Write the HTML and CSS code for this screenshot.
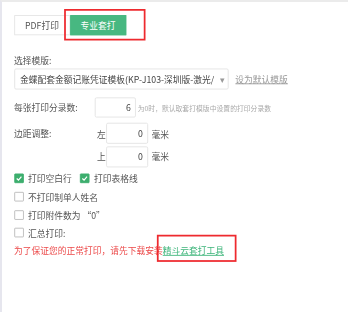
FILE: index.html
```html
<!DOCTYPE html>
<html>
<head>
  <meta charset="UTF-8" />
  <title>打印设置</title>
  <link rel="stylesheet" href="styles.css">
</head>
<body>
  <div class="frame">
    <div class="panel">
      <div class="tabs">
        <span class="tab">PDF打印</span>
        <span class="tab active">专业套打<span class="mark mark-tab"></span></span>
      </div>

      <div class="field-label">选择模版:</div>
      <div class="select-row">
        <div class="select">
          <span class="select-text">金蝶配套金额记账凭证模板(KP-J103-深圳版-激光/</span>
          <span class="caret">▾</span>
        </div>
        <a class="set-default">设为默认模版</a>
      </div>

      <div class="row count-row">
        <span class="label">每张打印分录数:</span>
        <span class="input count">6</span>
        <span class="hint">为0时，默认取套打模版中设置的打印分录数</span>
      </div>

      <div class="row margin-row">
        <span class="label">边距调整:</span>
        <div class="margin-grid">
          <span class="side">左</span><span class="input">0</span><span class="unit">毫米</span>
          <span class="side">上</span><span class="input">0</span><span class="unit">毫米</span>
        </div>
      </div>

      <div class="checks-inline">
        <label class="check"><span class="box checked"></span>打印空白行</label>
        <label class="check"><span class="box checked"></span>打印表格线</label>
      </div>
      <label class="check line"><span class="box"></span>不打印制单人姓名</label>
      <label class="check line"><span class="box"></span>打印附件数为 “0”</label>
      <label class="check line"><span class="box"></span>汇总打印:</label>

      <p class="warn">为了保证您的正常打印，请先下载安装<a class="tool-link">精斗云套打工具<span class="mark mark-link"></span></a></p>
    </div>
  </div>
</body>
</html>
```

FILE: styles.css
```css
html, body {
  margin: 0;
  padding: 0;
  background: #fff;
}
body {
  font-family: "Noto Sans CJK SC", "Noto Sans", sans-serif;
  font-size: 10px;
  color: #555;
  width: 348px;
  height: 312px;
  overflow: hidden;
}
.frame {
  box-sizing: border-box;
  height: 312px;
  border-top: 2px solid #ebebeb;
  border-left: 2px solid #e6e6ee;
  overflow: hidden;
}
/* the original page is rendered at a small zoom level */
.panel {
  width: 395px;
  padding: 15px 0 0 13.7px;
  transform: scale(0.875);
  transform-origin: 0 0;
}
.tabs {
  display: flex;
  height: 23px;
}
.tab {
  position: relative;
  box-sizing: border-box;
  width: 64px;
  height: 23px;
  line-height: 21px;
  text-align: center;
  border: 1px solid #e4e4e4;
  color: #555;
}
.tab.active {
  background: #47b881;
  border-color: #47b881;
  color: #fff;
}
.mark {
  position: absolute;
  border: 2.3px solid #ee2a2f;
  pointer-events: none;
}
.mark-tab {
  left: -8px;
  top: -8px;
  right: -23px;
  bottom: -7px;
}
.field-label {
  margin-top: 20.5px;
  line-height: 16px;
}
.select-row {
  display: flex;
  align-items: center;
  margin-top: 1px;
}
.select {
  box-sizing: border-box;
  width: 245px;
  height: 24px;
  border: 1px solid #e2e2e2;
  border-radius: 2px;
  display: flex;
  align-items: center;
  padding: 0 3px 0 6px;
  color: #444;
}
.select-text {
  flex: 1;
  white-space: nowrap;
  overflow: hidden;
}
.caret {
  color: #999;
  font-size: 10px;
  margin-left: 2px;
}
.set-default {
  margin-left: 8px;
  color: #999;
  text-decoration: underline;
}
.row {
  display: flex;
}
.label {
  width: 92.6px;
  flex-shrink: 0;
}
.count-row {
  margin-top: 9.2px;
  align-items: center;
}
.input {
  box-sizing: border-box;
  height: 23px;
  border: 1px solid #e2e2e2;
  border-radius: 2px;
  text-align: right;
  line-height: 21px;
  padding-right: 5px;
  color: #444;
}
.count {
  width: 47px;
}
.hint {
  margin-left: 2px;
  color: #aaa;
  white-space: nowrap;
  transform: scale(0.78);
  transform-origin: left center;
}
.margin-row {
  margin-top: 6.8px;
}
.margin-row .label {
  width: 95px;
  line-height: 24px;
}
.margin-grid {
  display: grid;
  grid-template-columns: 10.3px 48px auto;
  row-gap: 2.3px;
  align-items: center;
}
.margin-grid .input {
  height: 24px;
  line-height: 22px;
}
.unit {
  margin-left: 4px;
}
.checks-inline {
  display: flex;
  margin-top: 1.7px;
  gap: 9.4px;
}
.check {
  display: flex;
  align-items: center;
  height: 21.6px;
  color: #555;
}
.check.line {
  height: 20.7px;
}
.box {
  box-sizing: border-box;
  width: 11px;
  height: 11px;
  border: 1px solid #b8b8b8;
  border-radius: 1px;
  margin-right: 5px;
  background: #fff;
}
.box.checked {
  border-color: #3dae6e;
  background: #3dae6e url("data:image/svg+xml;utf8,<svg xmlns='http://www.w3.org/2000/svg' viewBox='0 0 10 10'><path d='M2 5.2 L4.2 7.2 L8 2.8' fill='none' stroke='white' stroke-width='1.5'/></svg>") center/100% no-repeat;
}
.warn {
  margin: 0;
  color: #ec4a4a;
  line-height: 20px;
}
.tool-link {
  position: relative;
  color: #3db57a;
  text-decoration: underline;
}
.mark-link {
  left: -7px;
  top: -10px;
  right: -14px;
  bottom: -6px;
}
```
